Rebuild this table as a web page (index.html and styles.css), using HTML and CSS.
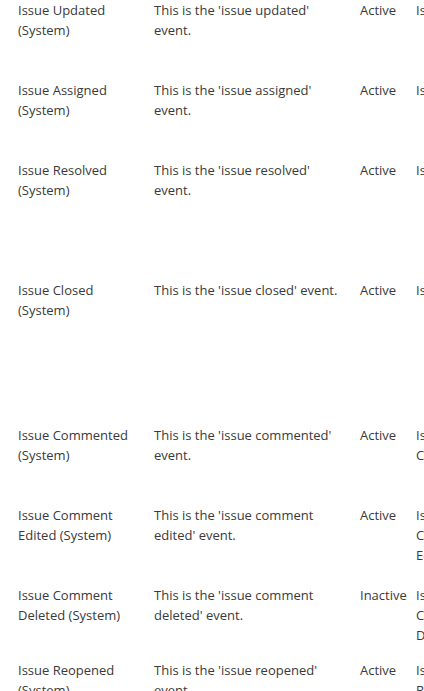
FILE: index.html
```html
<!DOCTYPE html>
<html lang="en">
<head>
<meta charset="utf-8">
<title>Events</title>
<link rel="stylesheet" href="styles.css">
</head>
<body>
<div class="viewport">
<table class="events">
  <colgroup>
    <col class="c-name"><col class="c-desc"><col class="c-status"><col class="c-tpl">
  </colgroup>
  <tbody>
    <tr class="r80"><td>Issue Updated (System)</td><td class="desc">This is the 'issue updated' event.</td><td class="status">Active</td><td>Issue Updated</td></tr>
    <tr class="r80"><td>Issue Assigned (System)</td><td class="desc">This is the 'issue assigned' event.</td><td class="status">Active</td><td>Issue Assigned</td></tr>
    <tr class="r120"><td>Issue Resolved (System)</td><td class="desc">This is the 'issue resolved' event.</td><td class="status">Active</td><td>Issue Resolved</td></tr>
    <tr class="r145"><td>Issue Closed (System)</td><td class="desc">This is the 'issue closed' event.</td><td class="status">Active</td><td>Issue Closed</td></tr>
    <tr class="r80"><td>Issue Commented (System)</td><td class="desc">This is the 'issue commented' event.</td><td class="status">Active</td><td>Issue Commented</td></tr>
    <tr class="r80"><td>Issue Comment Edited (System)</td><td class="desc">This is the 'issue comment edited' event.</td><td class="status">Active</td><td>Issue Comment Edited</td></tr>
    <tr class="r75"><td>Issue Comment Deleted (System)</td><td class="desc">This is the 'issue comment deleted' event.</td><td class="status">Inactive</td><td>Issue Comment Deleted</td></tr>
    <tr class="r80"><td>Issue Reopened (System)</td><td class="desc">This is the 'issue reopened' event.</td><td class="status">Active</td><td>Issue Reopened</td></tr>
  </tbody>
</table>
</div>
</body>
</html>
```
FILE: styles.css
```css
html, body {
  margin: 0;
  padding: 0;
  background: #fff;
}
.viewport {
  width: 424px;
  height: 691px;
  overflow: hidden;
}
.events {
  margin-left: 18px;
  border-collapse: collapse;
  table-layout: fixed;
  width: 498px;
  font-family: "Open Sans", "Noto Sans", sans-serif;
  font-size: 13px;
  line-height: 20px;
  color: #3a3a3a;
}
.c-name { width: 136px; }
.c-desc { width: 206px; }
.c-status { width: 56px; }
.c-tpl { width: 100px; }
.events td {
  vertical-align: top;
  padding: 0 10px 0 0;
}
.events td.desc {
  padding-right: 14px;
}
.events td.status {
  white-space: nowrap;
  padding-right: 0;
}
.r75 { height: 75px; }
.r80 { height: 80px; }
.r120 { height: 120px; }
.r145 { height: 145px; }
```
